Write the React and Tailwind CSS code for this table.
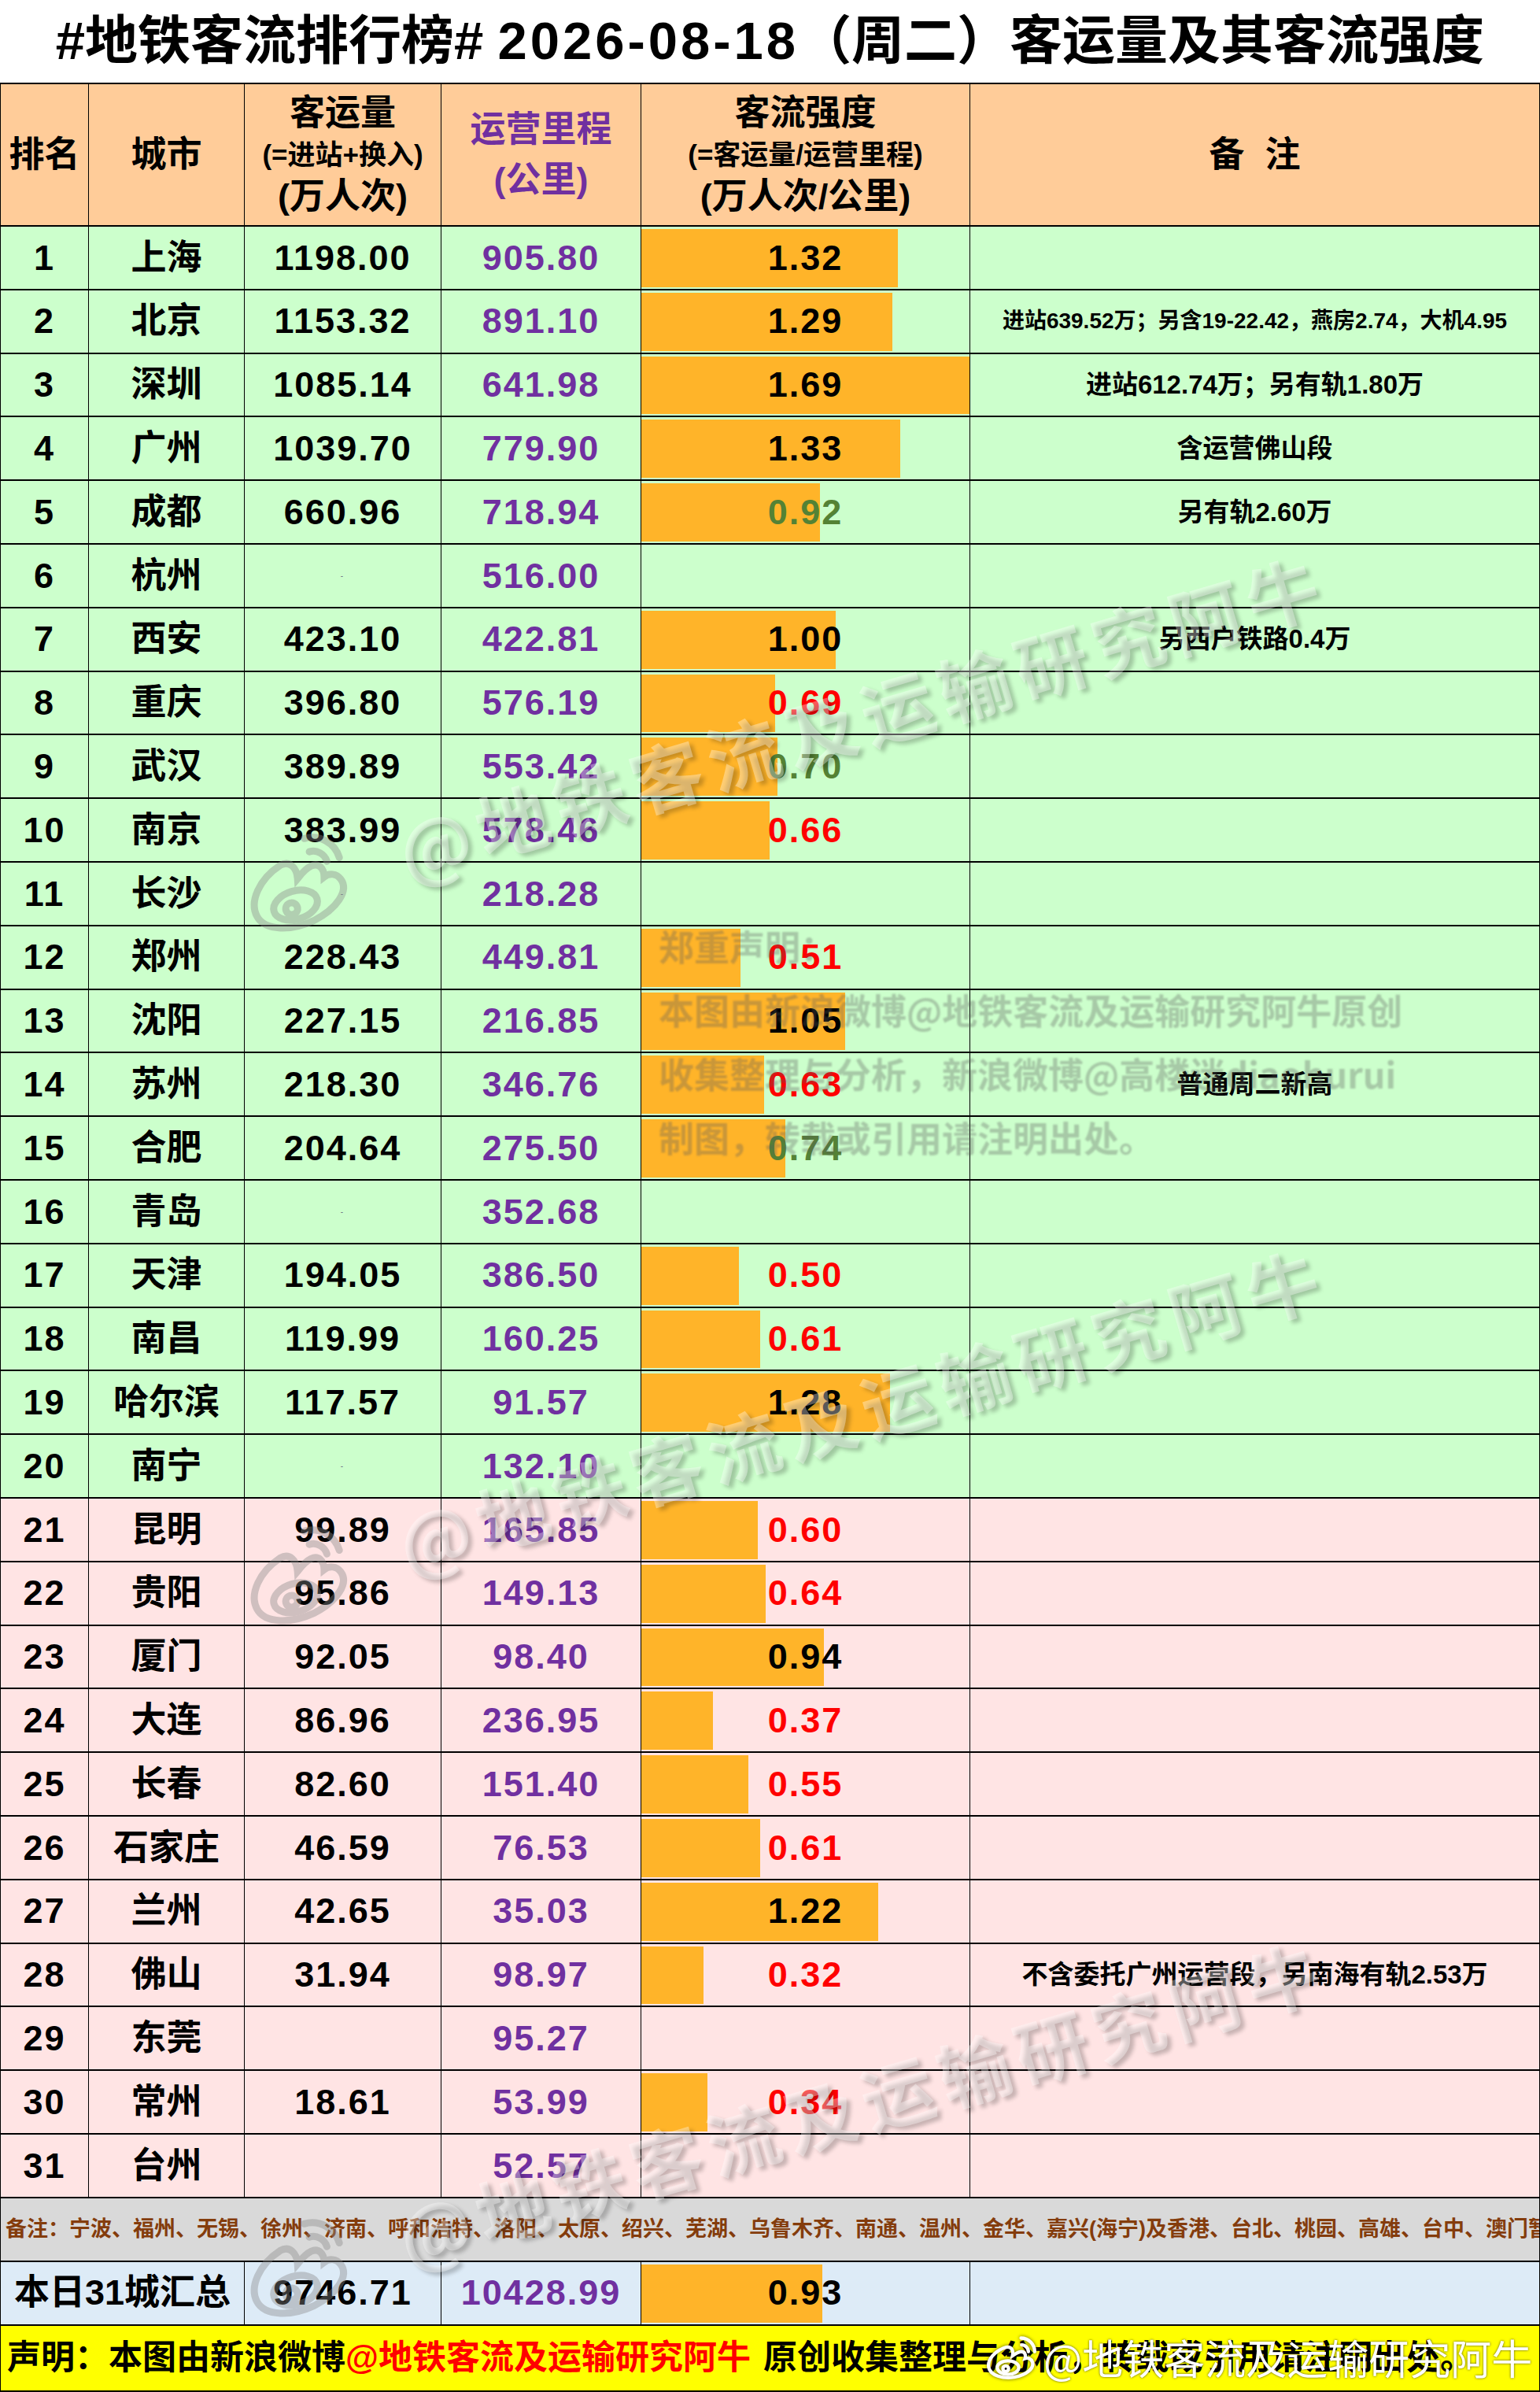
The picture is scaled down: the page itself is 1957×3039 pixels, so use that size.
import React from 'react';

// rank, city, volume, mileage, intensity, colour of intensity, note, small note
const rows = [
  [1, '上海', '1198.00', '905.80', 1.32, 'k', ''],
  [2, '北京', '1153.32', '891.10', 1.29, 'k', '进站639.52万；另含19-22.42，燕房2.74，大机4.95', true],
  [3, '深圳', '1085.14', '641.98', 1.69, 'k', '进站612.74万；另有轨1.80万'],
  [4, '广州', '1039.70', '779.90', 1.33, 'k', '含运营佛山段'],
  [5, '成都', '660.96', '718.94', 0.92, 'g', '另有轨2.60万'],
  [6, '杭州', '-', '516.00', null, 'k', ''],
  [7, '西安', '423.10', '422.81', 1.0, 'k', '另西户铁路0.4万'],
  [8, '重庆', '396.80', '576.19', 0.69, 'r', ''],
  [9, '武汉', '389.89', '553.42', 0.7, 'g', ''],
  [10, '南京', '383.99', '578.46', 0.66, 'r', ''],
  [11, '长沙', '-', '218.28', null, 'k', ''],
  [12, '郑州', '228.43', '449.81', 0.51, 'r', ''],
  [13, '沈阳', '227.15', '216.85', 1.05, 'k', ''],
  [14, '苏州', '218.30', '346.76', 0.63, 'r', '普通周二新高'],
  [15, '合肥', '204.64', '275.50', 0.74, 'g', ''],
  [16, '青岛', '-', '352.68', null, 'k', ''],
  [17, '天津', '194.05', '386.50', 0.5, 'r', ''],
  [18, '南昌', '119.99', '160.25', 0.61, 'r', ''],
  [19, '哈尔滨', '117.57', '91.57', 1.28, 'k', ''],
  [20, '南宁', '-', '132.10', null, 'k', ''],
  [21, '昆明', '99.89', '165.85', 0.6, 'r', ''],
  [22, '贵阳', '95.86', '149.13', 0.64, 'r', ''],
  [23, '厦门', '92.05', '98.40', 0.94, 'k', ''],
  [24, '大连', '86.96', '236.95', 0.37, 'r', ''],
  [25, '长春', '82.60', '151.40', 0.55, 'r', ''],
  [26, '石家庄', '46.59', '76.53', 0.61, 'r', ''],
  [27, '兰州', '42.65', '35.03', 1.22, 'k', ''],
  [28, '佛山', '31.94', '98.97', 0.32, 'r', '不含委托广州运营段，另南海有轨2.53万'],
  [29, '东莞', '', '95.27', null, 'k', ''],
  [30, '常州', '18.61', '53.99', 0.34, 'r', ''],
  [31, '台州', '', '52.57', null, 'k', ''],
];

const tone = { k: 'text-black', g: 'text-[#548235]', r: 'text-[#FF0000]' };

const grid = 'grid grid-cols-[112px_198px_250px_254px_418px_1fr]';
const cell = 'flex items-center justify-center border-r border-black';

function WeiboLogo({ className, stroke }) {
  return (
    <svg viewBox="0 0 100 84" className={className} fill="none" stroke={stroke} strokeWidth="6" strokeLinecap="round">
      <path d="M40 24 C20 30 6 46 9 60 C12 74 34 80 54 77 C76 73 90 61 86 50 C84 44 78 42 73 44 C75 37 72 31 65 32 C59 33 54 37 51 39 C53 30 49 22 40 24 Z" />
      <ellipse cx="43" cy="60" rx="19" ry="12" />
      <circle cx="39" cy="62" r="5" />
      <path d="M66 8 A24 24 0 0 1 90 32" />
      <path d="M67 20 A12 12 0 0 1 79 32" />
    </svg>
  );
}

function Watermark({ top }) {
  return (
    <div
      className={`pointer-events-none absolute left-[276px] ${top} flex h-[150px] w-[1460px] rotate-[-16.5deg] items-center gap-[60px]`}
    >
      <WeiboLogo className="h-[130px] w-[150px] opacity-40" stroke="#8a8a8a" />
      <span className="whitespace-nowrap font-['Noto_Sans_CJK_SC',sans-serif] text-[92px] font-bold tracking-[10px] text-[rgba(255,255,255,0.35)] [text-shadow:4px_5px_5px_rgba(0,0,0,0.22)]">
        @地铁客流及运输研究阿牛
      </span>
    </div>
  );
}

function DataRow({ r }) {
  const [rank, city, vol, mile, inten, col, note, small] = r;
  const bg = rank <= 20 ? 'bg-[#CCFFCC]' : 'bg-[#FFE4E4]';
  return (
    <div className={`${grid} h-[80.8px] border-b-2 border-black ${bg} text-[45px]`}>
      <div className={`${cell} tracking-[2px]`}>{rank}</div>
      <div className={cell}>{city}</div>
      <div className={`${cell} tracking-[2px]`}>
        {vol === '-' ? <span className="text-[10px] font-normal text-gray-500">-</span> : vol}
      </div>
      <div className={`${cell} tracking-[2px] text-[#7030A0]`}>{mile}</div>
      <div className={`relative ${cell}`}>
        {inten !== null && (
          <>
            <div className="absolute left-0 top-[3px] bottom-[2px] bg-[#FFB429]" style={{ width: inten * 247 }} />
            <span className={`relative tracking-[2px] ${tone[col]}`}>{inten.toFixed(2)}</span>
          </>
        )}
      </div>
      <div className={`flex items-center justify-center whitespace-nowrap ${small ? 'text-[28px]' : 'text-[33px]'}`}>
        {note}
      </div>
    </div>
  );
}

export default function App() {
  return (
    <div className="relative w-[1957px] overflow-hidden bg-white font-['Liberation_Sans','Noto_Sans_CJK_SC',sans-serif] font-bold text-black">
      <div className="flex h-[107px] items-center justify-center border-b-2 border-black text-[67px] whitespace-nowrap">
        #地铁客流排行榜# <span className="ml-[18px] tracking-[4px]">2026-08-18</span>（周二）客运量及其客流强度
      </div>

      <div className="border-x border-black">
        <div className={`${grid} h-[181px] border-b-2 border-black bg-[#FFCC99] text-[45px]`}>
          <div className={cell}>排名</div>
          <div className={cell}>城市</div>
          <div className={`${cell} flex-col`}>
            <div className="leading-[60px]">客运量</div>
            <div className="text-[35px] leading-[46px]">(=进站+换入)</div>
            <div className="leading-[60px]">(万人次)</div>
          </div>
          <div className={`${cell} flex-col text-[#7030A0]`}>
            <div className="leading-[64px]">运营里程</div>
            <div className="leading-[64px]">(公里)</div>
          </div>
          <div className={`${cell} flex-col`}>
            <div className="leading-[60px]">客流强度</div>
            <div className="text-[35px] leading-[46px]">(=客运量/运营里程)</div>
            <div className="leading-[60px]">(万人次/公里)</div>
          </div>
          <div className="flex items-center justify-center gap-[26px]">
            <span>备</span>
            <span>注</span>
          </div>
        </div>

        {rows.map((r) => (
          <DataRow key={r[0]} r={r} />
        ))}

        <div className="flex h-[81px] items-center overflow-hidden whitespace-nowrap border-b-2 border-black bg-[#D9D9D9] pl-[6px] text-[27px] text-[#843C0C]">
          备注：宁波、福州、无锡、徐州、济南、呼和浩特、洛阳、太原、绍兴、芜湖、乌鲁木齐、南通、温州、金华、嘉兴(海宁)及香港、台北、桃园、高雄、台中、澳门暂未纳入统计
        </div>

        <div className={`${grid} h-[81px] border-b-2 border-black bg-[#DDEBF7] text-[45px]`}>
          <div className={`${cell} col-span-2`}>本日31城汇总</div>
          <div className={`${cell} tracking-[2px]`}>9746.71</div>
          <div className={`${cell} tracking-[2px] text-[#7030A0]`}>10428.99</div>
          <div className={`relative ${cell}`}>
            <div className="absolute left-0 top-[3px] bottom-[2px] bg-[#FFB429]" style={{ width: 0.93 * 247 }} />
            <span className="relative tracking-[2px]">0.93</span>
          </div>
          <div />
        </div>

        <div className="flex h-[84px] items-center whitespace-nowrap border-b-2 border-black bg-[#FFFF00] pl-[8px] text-[43px]">
          声明：本图由新浪微博<span className="text-[#FF0000]">@地铁客流及运输研究阿牛</span>
          <span className="ml-[16px]">原创收集整理与分析，转载或引用请注明出处。</span>
        </div>
      </div>

      {/* overlays */}
      <Watermark top="top-[860px]" />
      <Watermark top="top-[1740px]" />
      <Watermark top="top-[2620px]" />

      <div className="pointer-events-none absolute left-[837px] top-[1161px] whitespace-nowrap font-['Noto_Sans_CJK_SC',sans-serif] text-[45px] font-bold leading-[81px] text-[rgba(90,90,90,0.33)] [filter:blur(1px)]">
        <div>郑重声明：</div>
        <div>本图由新浪微博@地铁客流及运输研究阿牛原创</div>
        <div>收集整理与分析，新浪微博@高楼迷diaohurui</div>
        <div>制图，转载或引用请注明出处。</div>
      </div>

      <div className="pointer-events-none absolute left-[1250px] top-[2956px] flex items-center gap-[4px]">
        <WeiboLogo className="h-[62px] w-[72px] [filter:drop-shadow(0_0_2px_rgba(0,0,0,0.6))]" stroke="#ffffff" />
        <span className="whitespace-nowrap font-['Noto_Sans_CJK_SC',sans-serif] text-[52px] font-normal text-white [text-shadow:0_0_3px_rgba(0,0,0,0.7)]">
          @地铁客流及运输研究阿牛
        </span>
      </div>
    </div>
  );
}
